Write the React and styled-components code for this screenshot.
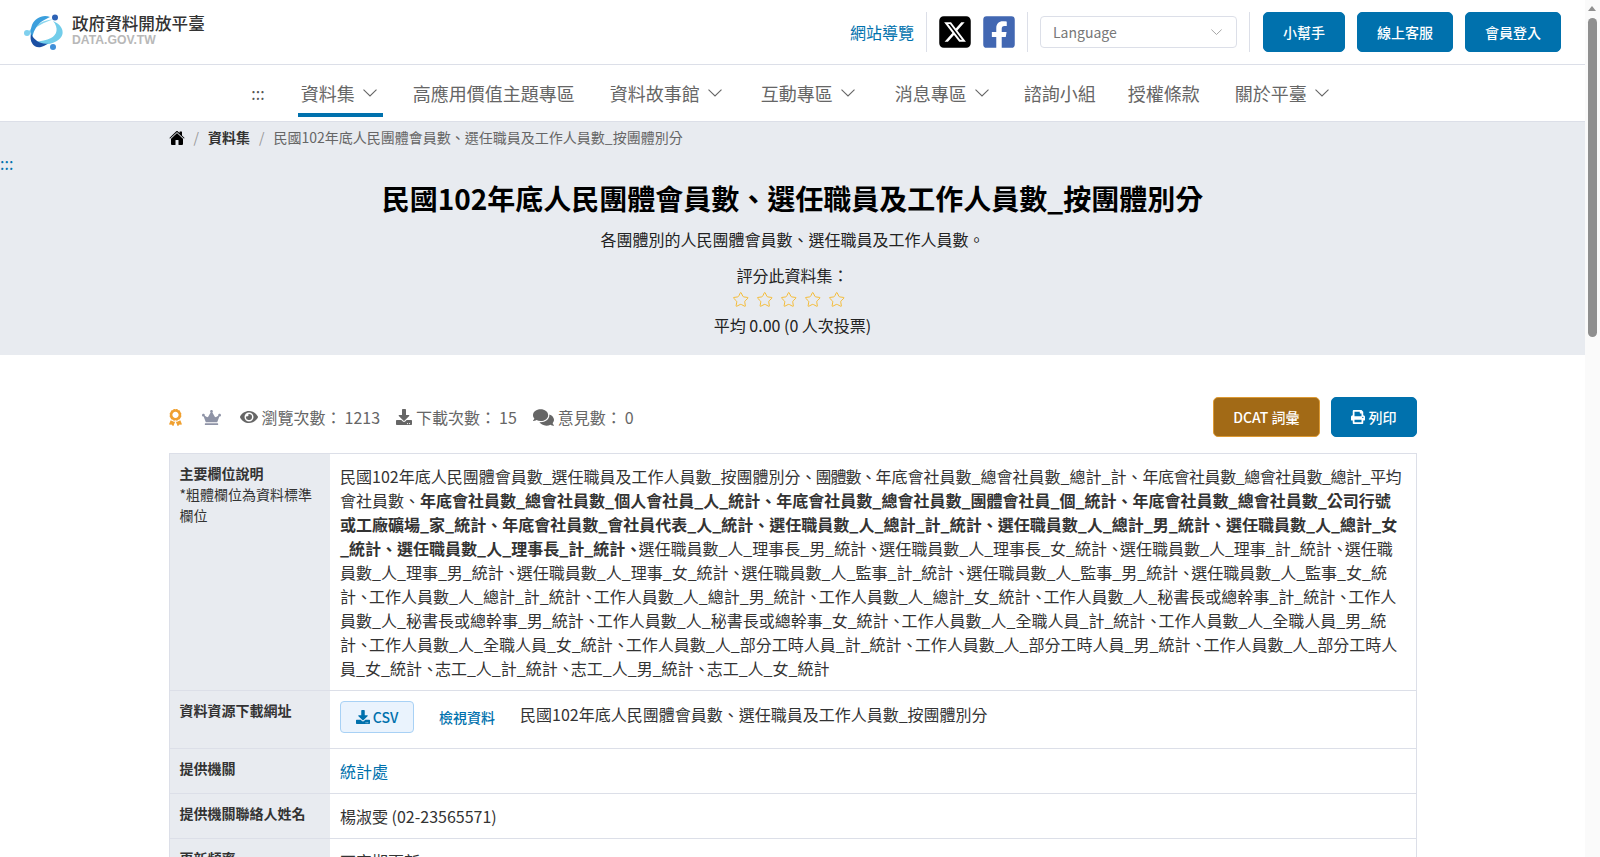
import React from "react";
import styled, { createGlobalStyle } from "styled-components";
import { FaAward, FaCrown, FaEye, FaDownload, FaComments, FaPrint, FaFacebookSquare } from "react-icons/fa";
import { FaSquareXTwitter } from "react-icons/fa6";
import { IoHome } from "react-icons/io5";
import { Star } from "lucide-react";

const GlobalStyle = createGlobalStyle`
  body {
    margin: 0;
    padding-right: 15px;
    background: #fff;
    color: #333;
    font-family: "Noto Sans CJK TC", "Noto Sans", sans-serif;
    font-size: 16px;
    line-height: 1.5;
  }
  * {
    box-sizing: border-box;
  }
  a {
    color: #0071ad;
    text-decoration: none;
  }
`;

const ScrollRail = styled.div`
  position: fixed;
  top: 0;
  right: 0;
  bottom: 0;
  width: 15px;
  background: #fafafa;
`;

const ScrollArrow = styled.div`
  width: 0;
  margin: 6px 0 0 3px;
  border-right: 4.5px solid transparent;
  border-bottom: 5px solid #8f8f8f;
  border-left: 4.5px solid transparent;
`;

const ScrollThumb = styled.div`
  width: 9px;
  height: 319px;
  margin: 7px 0 0 3px;
  border-radius: 5px;
  background: #8f8f8f;
`;

const TopBar = styled.header`
  display: flex;
  align-items: center;
  justify-content: space-between;
  height: 65px;
  padding: 0 24px 0 23px;
  border-bottom: 1px solid #dcdfe8;
`;

const Brand = styled.a`
  display: flex;
  align-items: center;
  gap: 8px;
  margin-top: 1px;
`;

const BrandText = styled.div`
  display: flex;
  flex-direction: column;
  margin-top: -4px;
`;

const BrandName = styled.span`
  color: #333;
  font-size: 16.6px;
  font-weight: 500;
  line-height: 20px;
  white-space: nowrap;
`;

const BrandSub = styled.span`
  color: #b8b8b8;
  font-family: "Liberation Sans", sans-serif;
  font-size: 12.2px;
  font-weight: 700;
  line-height: 15px;
`;

const TopActions = styled.div`
  display: flex;
  align-items: center;
`;

const Divided = styled.div`
  display: flex;
  align-items: center;
  height: 40px;
  padding: 0 12px;
  border-right: 1px solid #dcdfe8;
`;

const SocialGroup = styled(Divided)`
  gap: 8px;
  padding: 0 10px;
`;

const SiteMapLink = styled.a`
  font-size: 16px;
`;

const SocialLink = styled.a`
  display: flex;
  color: ${(p) => p.$color};
  font-size: 36px;
  line-height: 0;
`;

const LanguageBox = styled.div`
  display: flex;
  align-items: center;
  justify-content: space-between;
  width: 197px;
  height: 32px;
  padding: 0 14px 0 12px;
  border: 1px solid #dcdfe8;
  border-radius: 4px;
  color: #777;
  font-size: 14px;
`;

const TopButtons = styled.div`
  display: flex;
  gap: 12px;
  margin-left: 13px;
`;

const PrimaryButton = styled.button`
  display: inline-flex;
  align-items: center;
  justify-content: center;
  gap: 4px;
  height: 40px;
  padding: 0 19px;
  border: 1px solid #0071ad;
  border-radius: 5px;
  background: #0071ad;
  color: #fff;
  font-family: inherit;
  font-size: 14px;
  font-weight: 500;
  white-space: nowrap;
`;

const GoldButton = styled(PrimaryButton)`
  border-color: #dd9a33;
  background: #a26a16;
`;

const MainNav = styled.nav`
  display: flex;
  align-items: flex-start;
  justify-content: center;
  height: 57px;
  padding-right: 2px;
  border-bottom: 1px solid #dcdfe8;
`;

const NavItem = styled.a`
  display: flex;
  align-items: center;
  gap: 8px;
  height: 52px;
  margin: 0 ${(p) => 14 + (p.$extra || 0)}px 0 14px;
  padding: 8px ${(p) => (p.$menu ? 6 : 3)}px 0 3px;
  border-bottom: 4px solid ${(p) => (p.$active ? "#0071ad" : "transparent")};
  color: #666;
  font-size: 18px;
  white-space: nowrap;
`;

const SkipNavItem = styled(NavItem)`
  color: #555;
  font-size: 16px;
`;

const Hero = styled.section`
  height: 233px;
  background: #e8ebf0;
  text-align: center;
`;

const Crumbs = styled.ol`
  display: flex;
  align-items: center;
  width: 1248px;
  height: 29px;
  margin: 0 auto;
  padding: 2px 0 0;
  list-style: none;
  color: #666;
  font-size: 14px;
`;

const Crumb = styled.li`
  display: flex;
  align-items: center;
  color: ${(p) => (p.$strong ? "#333" : "#666")};
  font-weight: ${(p) => (p.$strong ? 700 : 400)};

  &:not(:first-child)::before {
    content: "/";
    margin: 0 9px;
    color: #999;
    font-weight: 400;
  }
`;

const HomeLink = styled.a`
  display: flex;
  color: #000;
  font-size: 16px;
`;

const SkipMark = styled.a`
  display: block;
  height: 19px;
  margin: 3px 0 -6px;
  font-size: 16px;
  line-height: 19px;
  text-align: left;
`;

const Title = styled.h2`
  margin: 0;
  padding-top: 12px;
  color: #000;
  font-size: 28px;
  font-weight: 700;
  line-height: 38px;
`;

const Lead = styled.p`
  margin: 10px 0 12px;
  color: #222;
  line-height: 24px;
`;

const RateLabel = styled.div`
  color: #222;
  line-height: 24px;
`;

const Stars = styled.div`
  display: flex;
  justify-content: center;
  gap: 6.5px;
  height: 26px;
  padding: 4px 7px 0 0;
  color: #f4b930;
`;

const RateAverage = styled.div`
  color: #222;
  line-height: 24px;
`;

const Content = styled.main`
  width: 1248px;
  margin: 0 auto;
  padding-top: 42px;
`;

const StatsRow = styled.div`
  display: flex;
  align-items: center;
  justify-content: space-between;
  height: 40px;
  margin-bottom: 16px;
`;

const Stats = styled.div`
  display: flex;
  align-items: center;
  margin-left: -2px;
  color: #666;
  font-size: 16px;
`;

const Badge = styled.span`
  display: flex;
  margin-right: ${(p) => p.$mr}px;
  color: ${(p) => p.$color};
  font-size: ${(p) => p.$size || 16}px;
`;

const Stat = styled.span`
  display: flex;
  align-items: center;
  gap: 4px;
  margin-right: 16px;

  svg {
    color: #666;
    font-size: ${(p) => p.$size || 18}px;
  }
`;

const StatValue = styled.span`
  margin-left: -1px;
`;

const StatActions = styled.div`
  display: flex;
  gap: 11px;
`;

const InfoTable = styled.table`
  width: 100%;
  border: 1px solid #dcdfe8;
  border-collapse: collapse;
  table-layout: fixed;
`;

const Row = styled.tr`
  border-bottom: 1px solid #dcdfe8;
`;

const HeadCell = styled.th`
  width: 161px;
  padding: 9px 10px 12px;
  background: #e8ebf0;
  color: #333;
  font-size: 14px;
  font-weight: 700;
  line-height: 21px;
  text-align: left;
  vertical-align: top;
`;

const Note = styled.span`
  display: block;
  font-weight: 400;
`;

const ValueCell = styled.td`
  padding: 10px;
  color: #333;
  line-height: 24px;
  vertical-align: top;
`;

const TightWord = styled.span`
  letter-spacing: ${(p) => p.$ls}px;
`;

const ResourceLine = styled.div`
  display: flex;
  align-items: flex-start;
  min-height: 37px;
`;

const CsvButton = styled.a`
  display: inline-flex;
  align-items: center;
  justify-content: center;
  gap: 3px;
  width: 74px;
  height: 32px;
  border: 1px solid #a8d1f5;
  border-radius: 4px;
  background: #eaf3fd;
  font-size: 14px;
  font-weight: 500;
`;

const ViewLink = styled.a`
  margin: 4px 25px 0;
  font-size: 14px;
  font-weight: 500;
`;

const ResourceName = styled.span`
  line-height: 26px;
`;

const Chevron = ({ w = 14, color = "currentColor" }) => (
  <svg width={w} height={w * 0.55} viewBox="0 0 14 7.7" fill="none" aria-hidden="true">
    <path d="M0.5 0.7 L7 7 L13.5 0.7" stroke={color} strokeWidth="1.1" />
  </svg>
);

const LogoMark = () => (
  <svg width="41" height="37" viewBox="0 0 41 37" aria-hidden="true">
    <path d="M5 18 C 12 10 22 6 30 5.5 C 22 8 13 12 6 20 Z" fill="#8ad6ee" />
    <path d="M30 7 C 37 10 40.5 15 39.5 20 C 38 26 30 30.5 20 30.5 C 15 30.5 11 29.5 8 27 C 14 28 22 27 28 24 C 34 21 36 14 30 7 Z" fill="#72cdea" />
    <path d="M27 3 C 20 0 12 4 9 11 C 7 16 7 21 9 25 C 10 18 13 12 18 8 C 21 6 24.5 4 27 3 Z" fill="#3b9fdd" />
    <path d="M8 20 C 6 28 11 34.5 18 33 C 21 32.3 23 31 25 29.5 C 18 30.5 12 27 8 20 Z" fill="#1b4fa3" />
    <circle cx="32" cy="3.5" r="3" fill="#2c62b5" />
    <circle cx="4" cy="19" r="3" fill="#7fd0ee" />
    <circle cx="30" cy="33" r="3" fill="#3f8fd8" />
  </svg>
);

const navItems = [
  { label: "資料集", menu: true, active: true, extra: -1 },
  { label: "高應用價值主題專區", extra: 1 },
  { label: "資料故事館", menu: true, extra: 2 },
  { label: "互動專區", menu: true, extra: 3 },
  { label: "消息專區", menu: true, extra: -2 },
  { label: "諮詢小組", extra: -2 },
  { label: "授權條款", extra: 1 },
  { label: "關於平臺", menu: true },
];

const plainLead = "民國102年底人民團體會員數_選任職員及工作人員數_按團體別分";
const boldFields = "年底會社員數_總會社員數_個人會社員_人_統計、年底會社員數_總會社員數_團體會社員_個_統計、年底會社員數_總會社員數_公司行號或工廠礦場_家_統計、年底會社員數_會社員代表_人_統計、選任職員數_人_總計_計_統計、選任職員數_人_總計_男_統計、選任職員數_人_總計_女_統計、選任職員數_人_理事長_計_統計";
const restFields = "選任職員數_人_理事長_男_統計、選任職員數_人_理事長_女_統計、選任職員數_人_理事_計_統計、選任職員數_人_理事_男_統計、選任職員數_人_理事_女_統計、選任職員數_人_監事_計_統計、選任職員數_人_監事_男_統計、選任職員數_人_監事_女_統計、工作人員數_人_總計_計_統計、工作人員數_人_總計_男_統計、工作人員數_人_總計_女_統計、工作人員數_人_秘書長或總幹事_計_統計、工作人員數_人_秘書長或總幹事_男_統計、工作人員數_人_秘書長或總幹事_女_統計、工作人員數_人_全職人員_計_統計、工作人員數_人_全職人員_男_統計、工作人員數_人_全職人員_女_統計、工作人員數_人_部分工時人員_計_統計、工作人員數_人_部分工時人員_男_統計、工作人員數_人_部分工時人員_女_統計、志工_人_計_統計、志工_人_男_統計、志工_人_女_統計";

const datasetName = "民國102年底人民團體會員數、選任職員及工作人員數_按團體別分";

const ShortComma = () => <TightWord $ls={-3}>、</TightWord>;

const App = () => {
  return (
    <>
      <GlobalStyle />
      <ScrollRail>
        <ScrollArrow />
        <ScrollThumb />
      </ScrollRail>

      <TopBar>
        <Brand href="#">
          <LogoMark />
          <BrandText>
            <BrandName>政府資料開放平臺</BrandName>
            <BrandSub>DATA.GOV.TW</BrandSub>
          </BrandText>
        </Brand>
        <TopActions>
          <Divided>
            <SiteMapLink href="#">網站導覽</SiteMapLink>
          </Divided>
          <SocialGroup>
            <SocialLink href="#" $color="#000" aria-label="X"><FaSquareXTwitter /></SocialLink>
            <SocialLink href="#" $color="#4267b2" aria-label="Facebook"><FaFacebookSquare /></SocialLink>
          </SocialGroup>
          <Divided>
            <LanguageBox>
              Language
              <Chevron w={11} color="#999" />
            </LanguageBox>
          </Divided>
          <TopButtons>
            <PrimaryButton>小幫手</PrimaryButton>
            <PrimaryButton>線上客服</PrimaryButton>
            <PrimaryButton>會員登入</PrimaryButton>
          </TopButtons>
        </TopActions>
      </TopBar>

      <MainNav>
        <SkipNavItem href="#" $extra={2}>:::</SkipNavItem>
        {navItems.map((item) => (
          <NavItem key={item.label} href="#" $active={item.active} $menu={item.menu} $extra={item.extra}>
            {item.label}
            {item.menu && <Chevron />}
          </NavItem>
        ))}
      </MainNav>

      <Hero>
        <Crumbs>
          <Crumb><HomeLink href="#" aria-label="首頁"><IoHome /></HomeLink></Crumb>
          <Crumb $strong>資料集</Crumb>
          <Crumb>{datasetName}</Crumb>
        </Crumbs>
        <SkipMark href="#">:::</SkipMark>
        <Title>{datasetName}</Title>
        <Lead>各團體別的人民團體會員數、選任職員及工作人員數。</Lead>
        <RateLabel>評分此資料集：</RateLabel>
        <Stars>
          {[1, 2, 3, 4, 5].map((n) => (
            <Star key={n} size={17.5} strokeWidth={1.3} />
          ))}
        </Stars>
        <RateAverage>平均 0.00 (0 人次投票)</RateAverage>
      </Hero>

      <Content>
        <StatsRow>
          <Stats>
            <Badge $color="#f0a030" $size={17} $mr={18}><FaAward /></Badge>
            <Badge $color="#8e93a6" $size={19} $mr={19}><FaCrown /></Badge>
            <Stat>
              <FaEye />瀏覽次數：<StatValue>1213</StatValue>
            </Stat>
            <Stat $size={16}>
              <FaDownload />下載次數：<StatValue>15</StatValue>
            </Stat>
            <Stat $size={21}>
              <FaComments />意見數：<StatValue>0</StatValue>
            </Stat>
          </Stats>
          <StatActions>
            <GoldButton>DCAT 詞彙</GoldButton>
            <PrimaryButton><FaPrint />列印</PrimaryButton>
          </StatActions>
        </StatsRow>

        <InfoTable>
          <tbody>
            <Row>
              <HeadCell>
                主要欄位說明
                <Note>*粗體欄位為資料標準欄位</Note>
              </HeadCell>
              <ValueCell>
                {plainLead}
                <TightWord $ls={-1}>、團體數、</TightWord>
                年底會社員數_總會社員數_總計_計、
                <TightWord $ls={-0.45}>年底會社員數_總會社員數_總計_平均</TightWord>
                會社員數、
                <strong>{boldFields}<ShortComma /></strong>
                {restFields.split("、").map((field, i) => (
                  <React.Fragment key={i}>
                    {i > 0 && <ShortComma />}
                    {field}
                  </React.Fragment>
                ))}
              </ValueCell>
            </Row>
            <Row>
              <HeadCell>資料資源下載網址</HeadCell>
              <ValueCell>
                <ResourceLine>
                  <CsvButton href="#"><FaDownload />CSV</CsvButton>
                  <ViewLink href="#">檢視資料</ViewLink>
                  <ResourceName>{datasetName}</ResourceName>
                </ResourceLine>
              </ValueCell>
            </Row>
            <Row>
              <HeadCell>提供機關</HeadCell>
              <ValueCell><a href="#">統計處</a></ValueCell>
            </Row>
            <Row>
              <HeadCell>提供機關聯絡人姓名</HeadCell>
              <ValueCell>楊淑雯 (02-23565571)</ValueCell>
            </Row>
            <Row>
              <HeadCell>更新頻率</HeadCell>
              <ValueCell>不定期更新</ValueCell>
            </Row>
          </tbody>
        </InfoTable>
      </Content>
    </>
  );
};

export default App;
